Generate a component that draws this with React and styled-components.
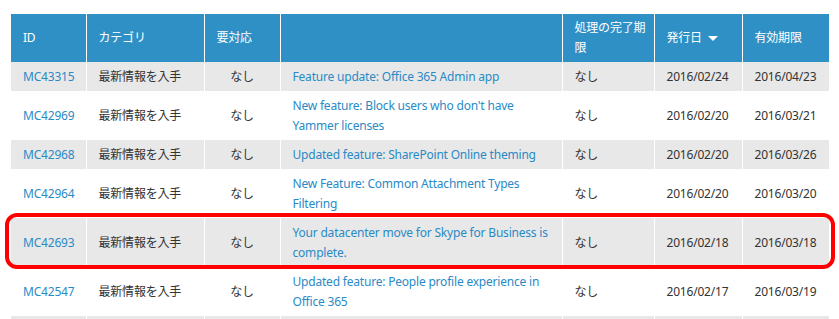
import styled, { createGlobalStyle } from "styled-components";

const Global = createGlobalStyle`
  body {
    margin: 0;
    background: #fff;
    font-family: "Noto Sans", "Noto Sans CJK JP", sans-serif;
  }
`;

const rows = [
  ["MC43315", "Feature update: Office 365 Admin app", "2016/02/24", "2016/04/23"],
  ["MC42969", "New feature: Block users who don't have Yammer licenses", "2016/02/20", "2016/03/21"],
  ["MC42968", "Updated feature: SharePoint Online theming", "2016/02/20", "2016/03/26"],
  ["MC42964", "New Feature: Common Attachment Types Filtering", "2016/02/20", "2016/03/20"],
  ["MC42693", "Your datacenter move for Skype for Business is complete.", "2016/02/18", "2016/03/18"],
  ["MC42547", "Updated feature: People profile experience in Office 365", "2016/02/17", "2016/03/19"],
];

const widths = [75, 118, 76, 282, 92, 88, 87];

const App = () => (
  <>
    <Global />
    <Wrap>
      <Table>
        <colgroup>
          {widths.map((w, i) => (
            <col key={i} style={{ width: w }} />
          ))}
        </colgroup>
        <thead>
          <tr>
            <Th>ID</Th>
            <Th>カテゴリ</Th>
            <Th>要対応</Th>
            <Th></Th>
            <Th>処理の完了期限</Th>
            <Th>
              発行日 <Caret />
            </Th>
            <Th>有効期限</Th>
          </tr>
        </thead>
        <tbody>
          {rows.map(([id, title, issued, expires], i) => (
            <Row key={id} $shaded={i % 2 === 0}>
              <Td><Link>{id}</Link></Td>
              <Td>最新情報を入手</Td>
              <Td $center>なし</Td>
              <Td><Link>{title}</Link></Td>
              <Td>なし</Td>
              <Td>{issued}</Td>
              <Td>{expires}</Td>
            </Row>
          ))}
          {/* next row, scrolled below the fold */}
          <Row $shaded>
            {widths.map((w, i) => (
              <Td key={i}>&nbsp;</Td>
            ))}
          </Row>
        </tbody>
      </Table>
      {/* red highlight annotation over the MC42693 row */}
      <Highlight />
    </Wrap>
  </>
);

export default App;

/* ===== styles ===== */

const Wrap = styled.div`
  position: relative;
  padding: 14px 0 0 11px;
  height: 319px;
  overflow: hidden;
  box-sizing: border-box;
`;

const Table = styled.table`
  width: 818px;
  table-layout: fixed;
  border-collapse: collapse;
  font-size: 12px;
  letter-spacing: -0.2px;
  color: #333;
`;

const Th = styled.th`
  background: #2f90c5;
  color: #fff;
  font-weight: normal;
  text-align: left;
  vertical-align: middle;
  height: 48px;
  box-sizing: border-box;
  padding: 4px 6px 4px 12px;
  line-height: 20px;
  border-left: 1px solid #fff;

  &:first-child {
    border-left: none;
  }
`;

const Caret = styled.span`
  display: inline-block;
  width: 0;
  height: 0;
  margin-left: 3px;
  vertical-align: middle;
  border-left: 5px solid transparent;
  border-right: 5px solid transparent;
  border-top: 5px solid #fff;
`;

const Row = styled.tr`
  background: ${(p) => (p.$shaded ? "#e8e8e8" : "#fff")};
`;

const Td = styled.td`
  padding: 5px 12px 4px;
  line-height: 20px;
  vertical-align: middle;
  text-align: ${(p) => (p.$center ? "center" : "left")};
  border-left: 1px solid #fff;

  &:first-child {
    border-left: none;
  }
`;

const Link = styled.span`
  color: #2a8ac6;
`;

const Highlight = styled.div`
  position: absolute;
  left: 5px;
  top: 213px;
  width: 830px;
  height: 56px;
  box-sizing: border-box;
  border: 4px solid #f00;
  border-radius: 12px;
  pointer-events: none;
`;
